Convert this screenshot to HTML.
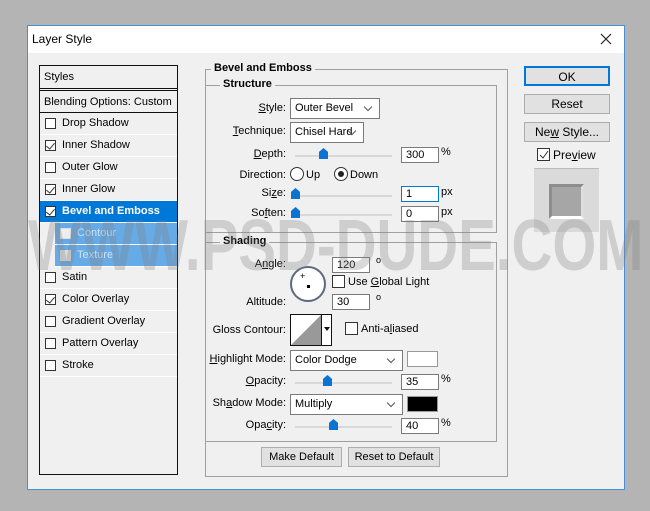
<!DOCTYPE html>
<html><head><meta charset="utf-8"><style>
*{box-sizing:border-box;margin:0;padding:0}
body{width:650px;height:511px;background:#b4b4b4;position:relative;overflow:hidden;font-family:"Liberation Sans",sans-serif;font-size:11px;color:#000}
.a{position:absolute}
#dlg{left:27px;top:25px;width:598px;height:465px;background:#f0f0f0;border:1px solid #4a8ed6}
#title{left:28px;top:26px;width:596px;height:27px;background:#fff}
.row{position:absolute;left:40px;width:137px;height:22px;border-bottom:1px solid #fff;line-height:21px;padding-left:22px}
.cb{position:absolute;left:5px;top:5px;width:11px;height:11px;border:1px solid #333;background:#fff}
.ck::after{content:"";position:absolute;left:2px;top:0px;width:4px;height:7px;border:solid #333;border-width:0 1px 1px 0;transform:rotate(40deg)}
.grp{position:absolute;border:1px solid #a0a0a0}
.lbl{position:absolute;text-align:right;width:100px}
.sel{position:absolute;height:21px;border:1px solid #7a7a7a;background:#fff;line-height:19px;padding-left:4px}
.sel::after{content:"";position:absolute;right:8px;top:5px;width:5px;height:5px;border:solid #555;border-width:0 1px 1px 0;transform:rotate(45deg)}
.inp{position:absolute;width:38px;height:16px;border:1px solid #7a7a7a;background:#fff;line-height:15px;padding-left:4px}
.trk{position:absolute;height:2px;width:97px;background:#d8d8d8}
.th{position:absolute;width:9px;height:11px;background:#0a74d0;clip-path:polygon(50% 0,100% 35%,100% 100%,0 100%,0 35%)}
.btn{position:absolute;height:20px;border:1px solid #adadad;background:#e1e1e1;text-align:center;line-height:18px;font-size:12px}
</style></head><body>
<div id="dlg" class="a"></div>
<div id="title" class="a"></div>
<div class="a" style="left:32px;top:32px;font-size:12px">Layer Style</div>
<svg class="a" style="left:600px;top:33px" width="12" height="12"><path d="M1 1L11 11M11 1L1 11" stroke="#222" stroke-width="1.2"/></svg>

<div class="a" style="left:39px;top:65px;width:139px;height:410px;border:1px solid #111;background:#f0f0f0"></div>
<div class="a" style="left:40px;top:66px;width:137px;height:23px;border-bottom:1px solid #111;line-height:22px;padding-left:4px">Styles</div>
<div class="a" style="left:40px;top:90px;width:137px;height:23px;border-top:1px solid #111;border-bottom:1px solid #111;line-height:22px;padding-left:4px">Blending Options: Custom</div>
<div class="row" style="top:113px"><span class="cb"></span>Drop Shadow</div>
<div class="row" style="top:135px"><span class="cb ck"></span>Inner Shadow</div>
<div class="row" style="top:157px"><span class="cb"></span>Outer Glow</div>
<div class="row" style="top:179px"><span class="cb ck"></span>Inner Glow</div>
<div class="row" style="top:201px;background:#0078d7;color:#fff;font-weight:bold"><span class="cb ck"></span>Bevel and Emboss</div>
<div class="row" style="top:223px;left:55px;width:122px;background:#66aae6;color:#cfe3f5"><span class="cb" style="border-color:#ddd;background:#eee"></span>Contour</div>
<div class="row" style="top:245px;left:55px;width:122px;background:#66aae6;color:#cfe3f5"><span class="cb" style="border-color:#ddd;background:#ddd"></span>Texture</div>
<div class="row" style="top:267px"><span class="cb"></span>Satin</div>
<div class="row" style="top:289px"><span class="cb ck"></span>Color Overlay</div>
<div class="row" style="top:311px"><span class="cb"></span>Gradient Overlay</div>
<div class="row" style="top:333px"><span class="cb"></span>Pattern Overlay</div>
<div class="row" style="top:355px"><span class="cb"></span>Stroke</div>

<div class="grp" style="left:205px;top:69px;width:303px;height:408px"></div>
<div class="a" style="left:211px;top:62px;background:#f0f0f0;padding:0 3px;font-weight:bold">Bevel and Emboss</div>
<div class="grp" style="left:205px;top:85px;width:292px;height:148px"></div>
<div class="a" style="left:220px;top:78px;background:#f0f0f0;padding:0 3px;font-weight:bold">Structure</div>
<div class="lbl" style="left:186px;top:102px"><u>S</u>tyle:</div>
<div class="sel" style="left:290px;top:98px;width:90px">Outer Bevel</div>
<div class="lbl" style="left:186px;top:125px"><u>T</u>echnique:</div>
<div class="sel" style="left:290px;top:122px;width:74px">Chisel Hard</div>
<div class="lbl" style="left:186px;top:148px"><u>D</u>epth:</div>
<div class="trk" style="left:295px;top:155px"></div><div class="th" style="left:319px;top:148px"></div>
<div class="inp" style="left:401px;top:147px">300</div><div class="a" style="left:441px;top:146px">%</div>
<div class="lbl" style="left:186px;top:169px">Direction:</div>
<div class="a" style="left:290px;top:167px;width:14px;height:14px;border:1px solid #333;border-radius:50%;background:#fff"></div>
<div class="a" style="left:306px;top:169px">Up</div>
<div class="a" style="left:334px;top:167px;width:14px;height:14px;border:1px solid #333;border-radius:50%;background:#fff"><div class="a" style="left:3px;top:3px;width:6px;height:6px;border-radius:50%;background:#222"></div></div>
<div class="a" style="left:350px;top:169px">Down</div>
<div class="lbl" style="left:186px;top:187px">Si<u>z</u>e:</div>
<div class="trk" style="left:295px;top:195px"></div><div class="th" style="left:291px;top:188px"></div>
<div class="inp" style="left:401px;top:186px;border-color:#0078d7">1</div><div class="a" style="left:441px;top:186px">px</div>
<div class="lbl" style="left:186px;top:207px">So<u>f</u>ten:</div>
<div class="trk" style="left:295px;top:214px"></div><div class="th" style="left:291px;top:207px"></div>
<div class="inp" style="left:401px;top:206px">0</div><div class="a" style="left:441px;top:206px">px</div>

<div class="grp" style="left:205px;top:242px;width:292px;height:200px"></div>
<div class="a" style="left:220px;top:235px;background:#f0f0f0;padding:0 3px;font-weight:bold">Shading</div>
<div class="lbl" style="left:186px;top:258px">A<u>n</u>gle:</div>
<div class="inp" style="left:332px;top:257px">120</div><div class="a" style="left:376px;top:255px;font-size:9px">o</div>
<div class="a" style="left:290px;top:266px;width:36px;height:36px;border:2px solid #5d6a7e;border-radius:50%;background:#fff"><div class="a" style="left:15px;top:17px;width:3px;height:3px;background:#000"></div><div class="a" style="left:8px;top:3px;font-size:9px">+</div></div>
<div class="a" style="left:332px;top:275px;width:13px;height:13px;border:1px solid #333;background:#fff"></div>
<div class="a" style="left:348px;top:276px">Use <u>G</u>lobal Light</div>
<div class="lbl" style="left:186px;top:296px">Altitude:</div>
<div class="inp" style="left:332px;top:294px">30</div><div class="a" style="left:376px;top:292px;font-size:9px">o</div>
<div class="lbl" style="left:186px;top:324px">Gloss Contour:</div>
<div class="a" style="left:290px;top:314px;width:42px;height:32px;border:1px solid #111;background:#fff;overflow:hidden"><svg width="30" height="30" class="a" style="left:0;top:0"><polygon points="0,30 30,0 30,30" fill="#999"/></svg><div class="a" style="left:30px;top:0;width:1px;height:30px;background:#111"></div><div class="a" style="left:33px;top:12px;border:3px solid transparent;border-top:4px solid #111"></div></div>
<div class="a" style="left:345px;top:322px;width:13px;height:13px;border:1px solid #333;background:#fff"></div>
<div class="a" style="left:361px;top:323px">Anti-a<u>l</u>iased</div>
<div class="lbl" style="left:186px;top:353px"><u>H</u>ighlight Mode:</div>
<div class="sel" style="left:290px;top:350px;width:113px">Color Dodge</div>
<div class="a" style="left:407px;top:351px;width:31px;height:16px;border:1px solid #999;background:#fff"></div>
<div class="lbl" style="left:186px;top:375px"><u>O</u>pacity:</div>
<div class="trk" style="left:295px;top:382px"></div><div class="th" style="left:323px;top:375px"></div>
<div class="inp" style="left:401px;top:374px">35</div><div class="a" style="left:441px;top:373px">%</div>
<div class="lbl" style="left:186px;top:397px">Sh<u>a</u>dow Mode:</div>
<div class="sel" style="left:290px;top:394px;width:113px">Multiply</div>
<div class="a" style="left:407px;top:396px;width:31px;height:16px;border:1px solid #999;background:#000"></div>
<div class="lbl" style="left:186px;top:419px">Opa<u>c</u>ity:</div>
<div class="trk" style="left:295px;top:426px"></div><div class="th" style="left:329px;top:419px"></div>
<div class="inp" style="left:401px;top:418px">40</div><div class="a" style="left:441px;top:417px">%</div>
<div class="btn" style="left:261px;top:447px;width:81px;font-size:11px">Make Default</div>
<div class="btn" style="left:348px;top:447px;width:92px;font-size:11px">Reset to Default</div>

<div class="btn" style="left:524px;top:66px;width:86px;border:2px solid #0078d7">OK</div>
<div class="btn" style="left:524px;top:94px;width:86px">Reset</div>
<div class="btn" style="left:524px;top:122px;width:86px">Ne<u>w</u> Style...</div>
<div class="a" style="left:537px;top:148px;width:13px;height:13px;border:1px solid #333;background:#fff"><svg class="a" style="left:1px;top:1px" width="10" height="10"><path d="M1 5L4 8L9 1" stroke="#333" fill="none"/></svg></div>
<div class="a" style="left:553px;top:148px;font-size:12px">Pre<u>v</u>iew</div>
<div class="a" style="left:534px;top:168px;width:65px;height:64px;background:#dadada;border-top:1px solid #bbb"></div>
<div class="a" style="left:549px;top:184px;width:35px;height:35px;background:#a6a6a6;border:3px solid #8d8d8d;border-bottom-color:#fff;border-right-color:#ddd"></div>

<div class="a" style="left:28px;top:203px;font-size:72px;line-height:86px;font-weight:bold;color:rgba(130,130,130,0.3);transform:scaleX(0.785);transform-origin:0 0;white-space:nowrap">WWW.PSD-DUDE.COM</div>
</body></html>
